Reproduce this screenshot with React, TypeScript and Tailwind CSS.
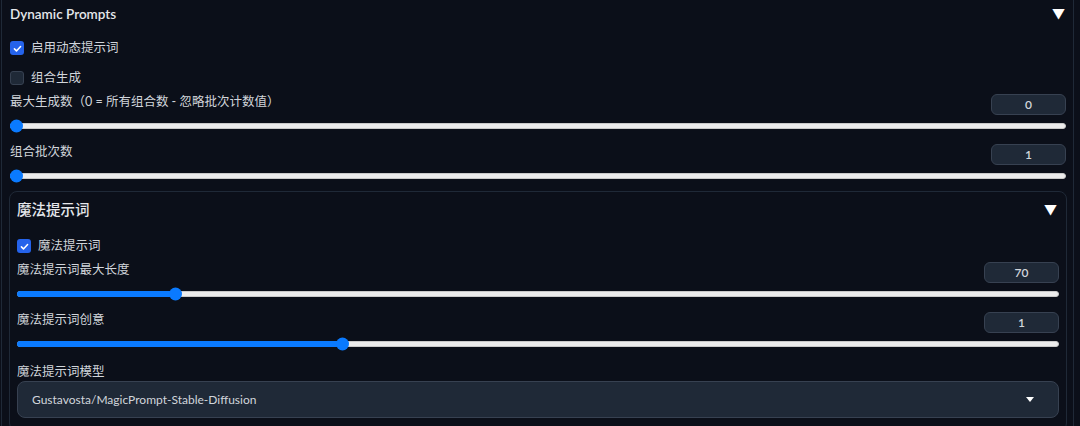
import React from 'react';

type SliderProps = {
  label: string;
  value: number;
  min: number;
  max: number;
  first?: boolean;
};

const font = { fontFamily: '"Lato", "Noto Sans CJK SC", sans-serif' };

const Checkbox: React.FC<{ checked: boolean; label: string }> = ({ checked, label }) => (
  <div className="flex h-[20px] items-center gap-[7px]">
    {checked ? (
      <span className="flex h-[14px] w-[14px] items-center justify-center rounded-[3px] bg-[#2563eb]">
        <svg viewBox="0 0 16 16" className="h-[11px] w-[11px]" fill="none">
          <path d="M3.5 8.5l3 3 6-6.5" stroke="white" strokeWidth="2.2" strokeLinecap="round" strokeLinejoin="round" />
        </svg>
      </span>
    ) : (
      <span className="h-[14px] w-[14px] rounded-[3px] border border-[#374151] bg-[#1f2937]" />
    )}
    <span className="text-[12.5px] leading-[16px] text-[#d1d5db]">{label}</span>
  </div>
);

const Slider: React.FC<SliderProps> = ({ label, value, min, max, first }) => {
  const pct = ((value - min) / (max - min)) * 100;
  return (
    <div>
      <div className={`flex h-[21px] items-start justify-between ${first ? 'mt-[6px]' : 'mt-[11px]'}`}>
        <span className="text-[12.5px] leading-[16px] text-[#d1d5db]">{label}</span>
        <div className="flex h-[21px] w-[75px] items-center justify-center rounded-[6px] border border-[#374151] bg-[#1f2937] text-[12px] font-semibold text-[#d1d5db]">
          {value}
        </div>
      </div>
      <div className="mt-[4px] flex h-[14px] items-center">
        <div className="relative h-[6px] w-full rounded-full border border-[#c9c9c9] bg-[#ececec]">
          <div className="absolute -top-px left-[-1px] h-[6px] rounded-full bg-[#0a7aff]" style={{ width: `calc(6px + (100% - 12px) * ${pct / 100})` }} />
          <div
            className="absolute top-1/2 -ml-px h-[13px] w-[13px] -translate-y-1/2 rounded-full bg-[#0a7aff]"
            style={{ left: `calc((100% - 13px) * ${pct / 100})` }}
          />
        </div>
      </div>
    </div>
  );
};

export default function App() {
  return (
    <div className="min-h-screen bg-[#0b0f19]" style={font}>
      <div className="ml-px w-[1073px] border-x border-[#1f2937] pb-4 pl-[8px] pr-[7px]">
        <div className="flex h-[28px] items-center justify-between">
          <span className="text-[13.5px] font-semibold text-[#e5e7eb]">Dynamic Prompts</span>
          <span className="pr-px text-[13px] text-white">▼</span>
        </div>

        <div className="mt-[10px]">
          <Checkbox checked label="启用动态提示词" />
        </div>
        <div className="mt-[10px]">
          <Checkbox checked={false} label="组合生成" />
        </div>

        <Slider first label="最大生成数（0 = 所有组合数 - 忽略批次计数值）" value={0} min={0} max={1000} />
        <Slider label="组合批次数" value={1} min={1} max={10} />

        <div className="-mx-px mt-[8px] rounded-lg border border-[#1f2937] px-[7px] pb-3">
          <div className="flex h-[36px] items-center justify-between">
            <span className="text-[14.5px] font-medium text-[#e5e7eb]">魔法提示词</span>
            <span className="pr-[2px] text-[13px] text-white">▼</span>
          </div>

          <div className="mt-[8px]">
            <Checkbox checked label="魔法提示词" />
          </div>

          <Slider first label="魔法提示词最大长度" value={70} min={30} max={300} />
          <Slider label="魔法提示词创意" value={1} min={0.1} max={3} />

          <div className="mt-[13px] text-[12.5px] leading-[16px] text-[#d1d5db]">魔法提示词模型</div>
          <div className="mt-px flex h-[37px] items-center justify-between rounded-lg border border-[#374151] bg-[#1f2937] pl-[14px] pr-[24px]">
            <span className="text-[12px] text-[#d1d5db]">Gustavosta/MagicPrompt-Stable-Diffusion</span>
            <svg viewBox="0 0 8 5" className="h-[5px] w-[8px]">
              <path d="M0 0h8L4 5z" fill="white" />
            </svg>
          </div>
        </div>
      </div>
    </div>
  );
}
